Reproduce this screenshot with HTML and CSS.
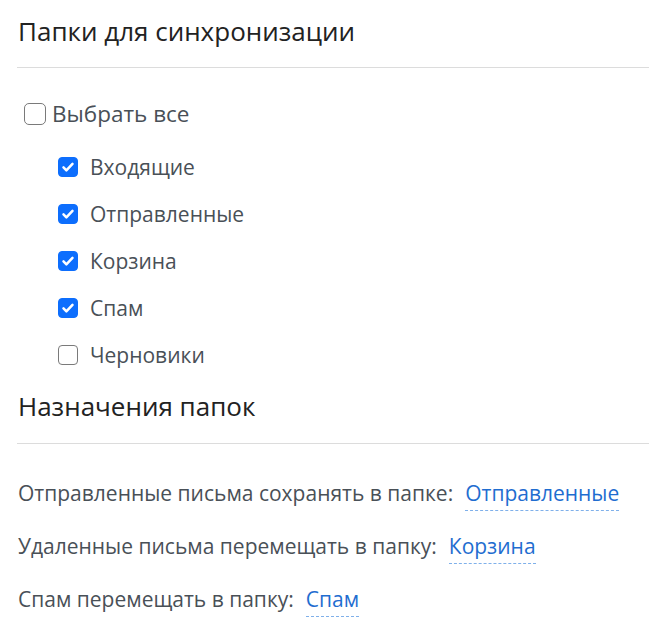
FILE: index.html
```html
<!DOCTYPE html>
<html lang="ru">
<head>
<meta charset="utf-8">
<link rel="stylesheet" href="styles.css">
</head>
<body>
<div class="page">
  <h2 class="title">Папки для синхронизации</h2>
  <hr class="sep">
  <div class="all">
    <span class="box big"></span><span class="all-label">Выбрать все</span>
  </div>
  <ul class="list">
    <li class="item"><span class="box on"><svg viewBox="0 0 20 20"><path d="M5 10.5l3.2 3.2L15 6.5" fill="none" stroke="#fff" stroke-width="2.8" stroke-linecap="round" stroke-linejoin="round"/></svg></span><span>Входящие</span></li>
    <li class="item"><span class="box on"><svg viewBox="0 0 20 20"><path d="M5 10.5l3.2 3.2L15 6.5" fill="none" stroke="#fff" stroke-width="2.8" stroke-linecap="round" stroke-linejoin="round"/></svg></span><span>Отправленные</span></li>
    <li class="item"><span class="box on"><svg viewBox="0 0 20 20"><path d="M5 10.5l3.2 3.2L15 6.5" fill="none" stroke="#fff" stroke-width="2.8" stroke-linecap="round" stroke-linejoin="round"/></svg></span><span>Корзина</span></li>
    <li class="item"><span class="box on"><svg viewBox="0 0 20 20"><path d="M5 10.5l3.2 3.2L15 6.5" fill="none" stroke="#fff" stroke-width="2.8" stroke-linecap="round" stroke-linejoin="round"/></svg></span><span>Спам</span></li>
    <li class="item"><span class="box"></span><span>Черновики</span></li>
  </ul>
  <h2 class="title title2">Назначения папок</h2>
  <hr class="sep sep2">
  <div class="rows">
    <div class="row"><span>Отправленные письма сохранять в папке:</span><a class="link">Отправленные</a></div>
    <div class="row"><span>Удаленные письма перемещать в папку:</span><a class="link">Корзина</a></div>
    <div class="row"><span>Спам перемещать в папку:</span><a class="link">Спам</a></div>
  </div>
</div>
</body>
</html>
```
FILE: styles.css
```css
html, body {
  margin: 0;
  padding: 0;
  background: #fff;
}
body {
  font-family: "Open Sans", "Noto Sans", sans-serif;
  color: #444;
}
.page {
  padding: 14px 0 0 18px;
}
.title {
  margin: 0;
  font-size: 26px;
  font-weight: 400;
  color: #222;
  line-height: 34px;
}
.sep {
  margin: 19px 0 0 -1px;
  border: 0;
  border-top: 1px solid #dcdcdc;
}
.all {
  display: flex;
  align-items: center;
  gap: 6px;
  margin: 33px 0 0 6px;
  font-size: 22.5px;
  line-height: 26px;
  color: #495057;
}
.box {
  width: 20px;
  height: 20px;
  border: 1.5px solid #7a7a7a;
  border-radius: 4px;
  box-sizing: border-box;
  display: inline-flex;
  align-items: center;
  justify-content: center;
  flex: none;
  background: #fff;
}
.box.big {
  width: 22px;
  height: 22px;
  border-radius: 5px;
}
.box.on {
  background: #0d6efd;
  border-color: #0d6efd;
}
.box svg {
  width: 20px;
  height: 20px;
}
.list {
  list-style: none;
  margin: 27px 0 0 40px;
  padding: 0;
  display: flex;
  flex-direction: column;
  gap: 21px;
}
.item {
  display: flex;
  align-items: center;
  gap: 12px;
  font-size: 21px;
  line-height: 26px;
  color: #495057;
}
.title2 {
  margin-top: 21px;
}
.sep2 {
  margin-top: 20px;
}
.rows {
  margin-top: 36px;
  display: flex;
  flex-direction: column;
  gap: 22px;
}
.row {
  display: flex;
  align-items: baseline;
  gap: 12px;
  font-size: 21px;
  line-height: 26px;
  color: #495057;
}
.link {
  color: #1f6dd0;
  border-bottom: 1px dashed #7fb0ea;
  padding-bottom: 4px;
  cursor: pointer;
}
```
